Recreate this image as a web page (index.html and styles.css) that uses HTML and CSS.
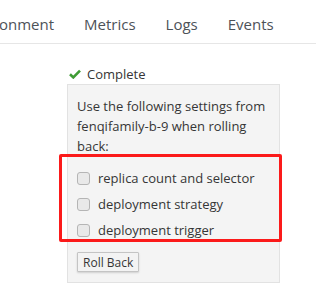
FILE: index.html
```html
<!DOCTYPE html>
<html lang="en">
<head>
    <meta charset="UTF-8">
    <title>Rollback</title>
    <link rel="stylesheet" href="styles.css">
</head>
<body>

<!-- Tabs across the top -->
<nav class="tabs">
    <a class="tab">Environment</a>
    <a class="tab">Metrics</a>
    <a class="tab">Logs</a>
    <a class="tab">Events</a>
</nav>

<div class="content">
    <div class="status">
        <svg class="check" width="12" height="10" viewBox="0 0 12 10">
            <path d="M1 5.2 L4.3 8.4 L11 1.6" fill="none" stroke="#3f9c35" stroke-width="2.6"/>
        </svg>
        <span>Complete</span>
    </div>

    <div class="panel">
        <p>Use the following settings from fenqifamily-b-9 when rolling back:</p>

        <div class="options">
            <label class="option"><input type="checkbox"> replica count and selector</label>
            <label class="option"><input type="checkbox"> deployment strategy</label>
            <label class="option"><input type="checkbox"> deployment trigger</label>
        </div>

        <button type="button">Roll Back</button>
    </div>
</div>

<!-- red annotation box drawn over the options -->
<div class="highlight"></div>

</body>
</html>
```

FILE: styles.css
```css
body {
    margin: 0;
    font-family: "Open Sans", sans-serif;
    color: #363636;
    background-color: white;
}
.tabs {
    display: flex;
    height: 43px;
    align-items: center;
    margin-left: -51px;
    border-bottom: 1px solid #e6e6e6;
    white-space: nowrap;
}
.tab {
    font-size: 15px;
    padding: 0 15px;
    color: #4d5258;
    margin-top: 4px;
}
.content {
    margin-left: 67px;
    width: 213px;
}
.status {
    display: flex;
    align-items: center;
    height: 20px;
    margin-top: 20px;
    font-size: 13px;
}
.check {
    margin-left: 2px;
    margin-right: 6px;
}
.panel {
    background-color: #f4f4f4;
    border: 1px solid #e2e2e2;
    padding: 11px 9px 10px 9px;
    font-size: 13px;
}
.panel p {
    margin: 0;
    line-height: 20px;
}
.options {
    margin-top: 9px;
}
.option {
    display: flex;
    align-items: center;
    height: 26px;
}
.option input {
    appearance: none;
    width: 13px;
    height: 13px;
    margin: 0 8px 0 0;
    border: 1px solid #b5b5b5;
    border-radius: 3px;
    background-color: #e9e9e9;
}
button {
    margin-top: 9px;
    height: 20px;
    padding: 0 5px;
    font-family: "Open Sans", sans-serif;
    font-size: 12px;
    color: #363636;
    background-color: #f3f3f3;
    border: 1px solid #c4c4c4;
    border-radius: 1px;
    box-shadow: 0 1px 2px rgba(0, 0, 0, 0.15);
}
.highlight {
    position: absolute;
    left: 59px;
    top: 154px;
    width: 217px;
    height: 82px;
    border: 3px solid #fb1a1a;
    border-radius: 2px;
}
```
